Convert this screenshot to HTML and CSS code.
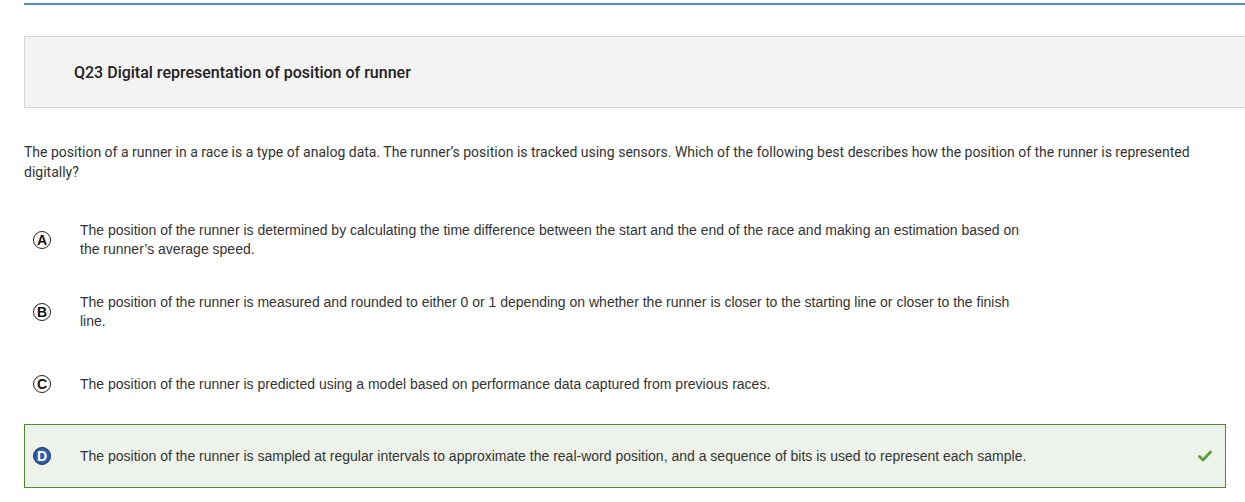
FILE: index.html
```html
<!DOCTYPE html>
<html>
<head>
<meta charset="utf-8">
<link rel="stylesheet" href="styles.css">
</head>
<body>
<div class="page">
  <div class="topline"></div>
  <div class="header">
    <h1 class="title">Q23 Digital representation of position of runner</h1>
  </div>
  <p class="question">The position of a runner in a race is a type of analog data. The runner’s position is tracked using sensors. Which of the following best describes how the position of the runner is represented digitally?</p>
  <div class="options">
    <div class="option">
      <span class="letter">A</span>
      <span class="text">The position of the runner is determined by calculating the time difference between the start and the end of the race and making an estimation based on the runner’s average speed.</span>
    </div>
    <div class="option">
      <span class="letter">B</span>
      <span class="text">The position of the runner is measured and rounded to either 0 or 1 depending on whether the runner is closer to the starting line or closer to the finish line.</span>
    </div>
    <div class="option">
      <span class="letter">C</span>
      <span class="text">The position of the runner is predicted using a model based on performance data captured from previous races.</span>
    </div>
    <div class="option correct">
      <span class="letter selected">D</span>
      <span class="text">The position of the runner is sampled at regular intervals to approximate the real-word position, and a sequence of bits is used to represent each sample.</span>
      <svg class="check" width="14" height="12" viewBox="0 0 14 12"><path d="M1.5 6.5 L5 10 L12.5 2" fill="none" stroke="#5a9e3a" stroke-width="2.8" stroke-linecap="round" stroke-linejoin="round"/></svg>
    </div>
  </div>
</div>
</body>
</html>
```
FILE: styles.css
```css
html, body {
  margin: 0;
  padding: 0;
  background: #fff;
  overflow: hidden;
}
.page {
  padding: 3px 0 0 24px;
  width: 1240px;
  font-family: Roboto, "Liberation Sans", sans-serif;
  color: #333;
}
.topline {
  height: 2px;
  background: #4a90d6;
  width: 1240px;
}
.header {
  margin-top: 31px;
  height: 70px;
  border: 1px solid #d6d6d6;
  background: #f3f3f3;
  display: flex;
  align-items: center;
  width: 1240px;
}
.title {
  margin: 0 0 0 49px;
  font-size: 16px;
  font-weight: 500;
  color: #222;
}
.question {
  margin: 34px 0 0 0;
  width: 1180px;
  font-size: 14px;
  line-height: 20px;
  color: #333;
}
.options {
  margin-top: 26px;
  width: 1202px;
  display: flex;
  flex-direction: column;
  gap: 8px;
}
.option {
  height: 62px;
  border: 1px solid transparent;
  display: flex;
  align-items: center;
  font-family: "Liberation Sans", Arial, sans-serif;
  font-size: 14px;
  line-height: 19px;
  color: #333;
}
.letter {
  flex: none;
  width: 16px;
  height: 16px;
  border: 1.5px solid #222;
  border-radius: 50%;
  margin-left: 8px;
  margin-right: 29px;
  display: flex;
  align-items: center;
  justify-content: center;
  font-weight: bold;
  font-size: 14px;
  color: #111;
}
.letter.selected {
  background: #2b5db0;
  color: #fff;
  border-color: #1d2f55;
}
.text {
  width: 950px;
}
.correct {
  background: #edf3ea;
  border-color: #4d8c30;
}
.check {
  margin-left: auto;
  margin-right: 13px;
}
```
